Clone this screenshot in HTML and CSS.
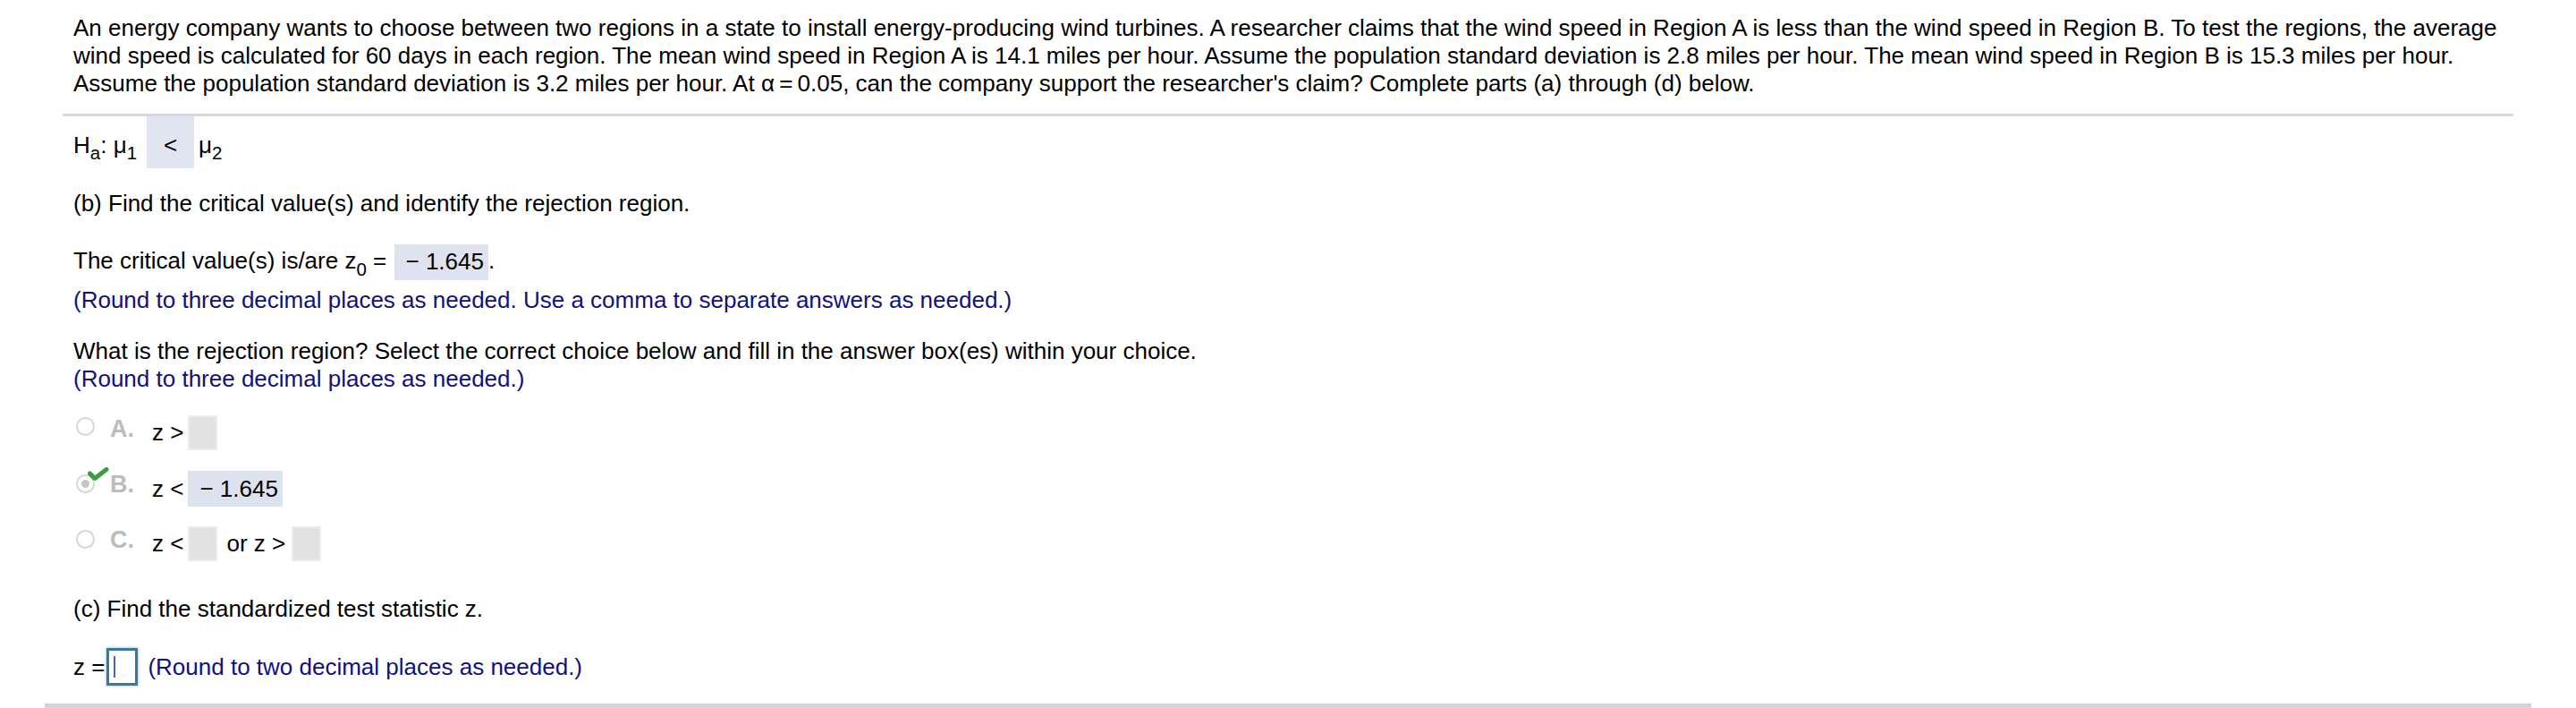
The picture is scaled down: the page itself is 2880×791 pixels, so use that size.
FILE: index.html
```html
<!DOCTYPE html>
<html>
<head>
<meta charset="utf-8">
<link rel="stylesheet" href="styles.css">
</head>
<body>
<div class="page">
  <p class="problem">An energy company wants to choose between two regions in a state to install energy-producing wind turbines. A researcher claims that the wind speed in Region A is less than the wind speed in Region B. To test the regions, the average wind speed is calculated for 60 days in each region. The mean wind speed in Region A is 14.1 miles per hour. Assume the population standard deviation is 2.8 miles per hour. The mean wind speed in Region B is 15.3 miles per hour. Assume the population standard deviation is 3.2 miles per hour. At &alpha;&thinsp;=&thinsp;0.05, can the company support the researcher's claim? Complete parts (a) through (d) below.</p>
  <div class="sep"></div>
  <div class="content">
    <div class="ha">
      <span class="t">H<span class="sub">a</span>: &mu;<span class="sub">1</span></span>
      <span class="sel">&lt;</span>
      <span class="t">&mu;<span class="sub">2</span></span>
    </div>
    <p class="line part-b">(b) Find the critical value(s) and identify the rejection region.</p>
    <p class="line crit">The critical value(s) is/are z<span class="sub">0</span> = <span class="ans">&minus; 1.645</span>.</p>
    <p class="line note note-crit">(Round to three decimal places as needed. Use a comma to separate answers as needed.)</p>
    <p class="line what">What is the rejection region? Select the correct choice below and fill in the answer box(es) within your choice.<br><span class="note">(Round to three decimal places as needed.)</span></p>
    <div class="choices">
      <div class="choice choice-a">
        <span class="radio"></span>
        <span class="letter">A.</span>
        <span class="expr">z &gt;<span class="box empty"></span></span>
      </div>
      <div class="choice choice-b">
        <span class="radio checked">
          <svg class="check" viewBox="0 0 24 16" width="24" height="16"><polyline points="2.5,7 8,12.5 21,2.5" fill="none" stroke="#3c9c42" stroke-width="5" stroke-linejoin="round" stroke-linecap="round"/></svg>
        </span>
        <span class="letter">B.</span>
        <span class="expr">z &lt;<span class="box filled">&minus; 1.645</span></span>
      </div>
      <div class="choice choice-c">
        <span class="radio"></span>
        <span class="letter">C.</span>
        <span class="expr">z &lt;<span class="box empty"></span><span class="or">or z &gt;</span><span class="box empty"></span></span>
      </div>
    </div>
    <p class="line part-c">(c) Find the standardized test statistic z.</p>
    <div class="zrow">
      <span>z =</span>
      <span class="input"><span class="caret"></span></span>
      <span class="note">(Round to two decimal places as needed.)</span>
    </div>
  </div>
  <div class="bottom-bar"></div>
</div>
</body>
</html>
```
FILE: styles.css
```css
html, body {
  margin: 0;
  padding: 0;
  background: #ffffff;
}
body {
  font-family: "Liberation Sans", Arial, sans-serif;
  font-size: 26px;
  color: #000;
}
.page {
  width: 2880px;
  height: 791px;
  overflow: hidden;
}
.problem {
  margin: 0 0 0 82px;
  padding-top: 15.5px;
  width: 2740px;
  line-height: 31px;
}
.sep {
  margin: 18px 0 0 70px;
  width: 2740px;
  height: 3px;
  background: #d4d9e3;
}
.content {
  padding-left: 82px;
}
.sub {
  font-size: 20.5px;
  position: relative;
  top: 7px;
  line-height: 0;
}
.ha {
  display: flex;
  align-items: flex-start;
  height: 58px;
  line-height: 31px;
}
.ha .t {
  padding-top: 17.4px;
}
.ha .sel {
  box-sizing: border-box;
  width: 53px;
  height: 58px;
  padding-top: 17.4px;
  margin: 0 5px 0 11px;
  text-align: center;
  background: #e1e5ef;
}
.line {
  margin: 0;
  line-height: 31px;
}
.part-b { margin-top: 24.7px; }
.crit { margin-top: 30.3px; }
.ans {
  display: inline-block;
  padding: 3.4px 5px 5.6px 12px;
  margin-left: 2px;
  background: #dfe3ef;
  line-height: 31px;
}
.note {
  color: #10107f;
}
.note-crit { margin-top: 6.7px; }
.what { margin-top: 26px; }
.choices {
  margin-top: 25.3px;
}
.choice {
  display: flex;
  align-items: flex-start;
  line-height: 31px;
}
.choice-b { margin-top: 23px; }
.choice-c { margin-top: 22px; }
.radio {
  position: relative;
  box-sizing: border-box;
  width: 21px;
  height: 21px;
  margin: 2px 0 0 3px;
  border: 2px solid #d6d6d6;
  border-radius: 50%;
  background: #fff;
  flex: none;
}
.choice-b .radio { margin-top: 4px; }
.choice-c .radio { margin-top: 4px; }
.radio.checked::after {
  content: "";
  position: absolute;
  left: 4px;
  top: 4px;
  width: 9px;
  height: 9px;
  border-radius: 50%;
  background: #c6c6c6;
}
.check {
  position: absolute;
  left: 11px;
  top: -10px;
  z-index: 1;
}
.letter {
  width: 47px;
  margin-left: 17px;
  margin-top: 0;
  font-size: 27px;
  font-weight: bold;
  color: #bcbcbc;
  flex: none;
}
.expr {
  display: flex;
  align-items: center;
  white-space: pre;
}
.box {
  box-sizing: border-box;
  display: inline-block;
  margin-left: 5px;
}
.box.empty {
  width: 33px;
  height: 39px;
  background: #e2e2e2;
  border: 2px solid #ececec;
}
.box.filled {
  height: 40px;
  padding: 4.5px 5px 0 13px;
  background: #dde2ef;
}
.or {
  margin-left: 10px;
}
.expr .or + .box { margin-left: 7px; }
.part-c { margin-top: 37.7px; }
.zrow {
  display: flex;
  align-items: center;
  margin-top: 28.3px;
  line-height: 31px;
  white-space: pre;
}
.input {
  position: relative;
  box-sizing: border-box;
  width: 35px;
  height: 42px;
  margin: 0 11px 0 2px;
  border: 3px solid #3b7998;
  background: #fff;
  box-shadow: 0 0 3px rgba(59, 121, 152, 0.6);
}
.caret {
  position: absolute;
  left: 5px;
  top: 6px;
  width: 1.5px;
  height: 24px;
  background: #3a67c9;
}
.bottom-bar {
  margin: 20px 0 0 50px;
  width: 2780px;
  height: 5px;
  background: #d0d3d9;
}
```
